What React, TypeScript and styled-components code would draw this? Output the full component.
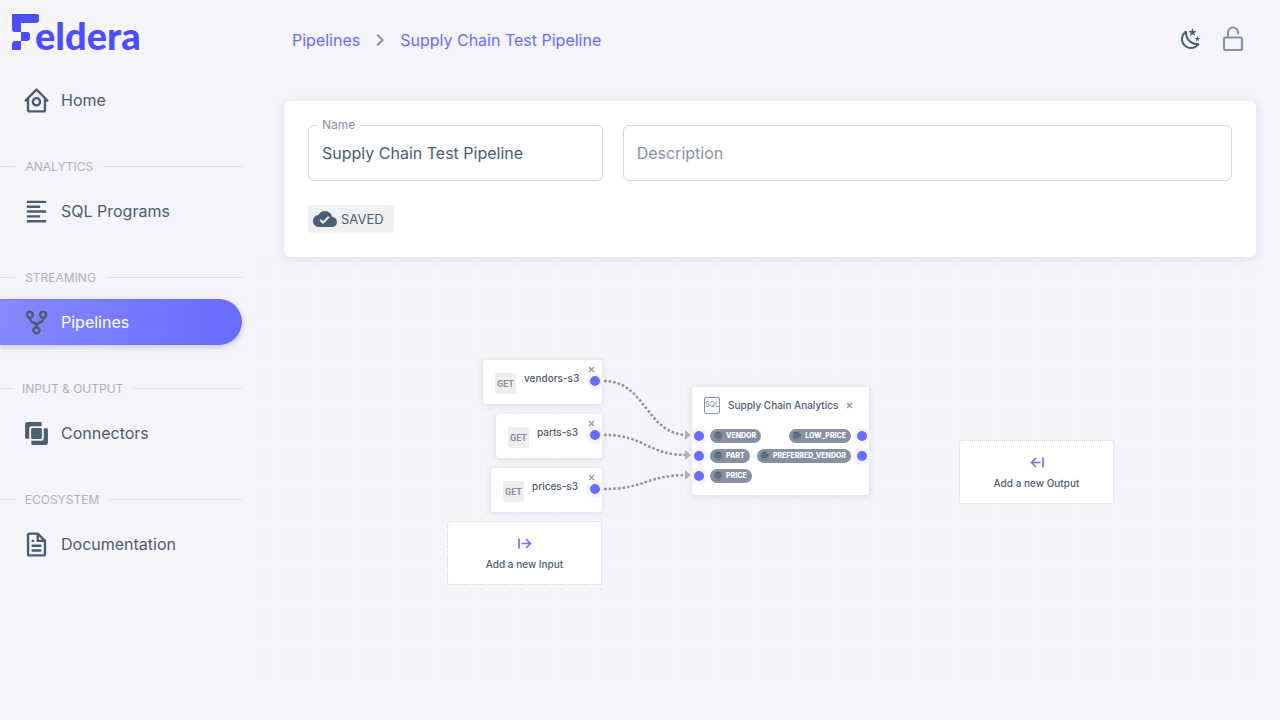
import React, { useState } from 'react'
import styled, { createGlobalStyle } from 'styled-components'
import { BiHomeCircle, BiAlignLeft, BiGitRepoForked, BiFile } from 'react-icons/bi'
import { MdCloudDone, MdChevronRight } from 'react-icons/md'

const color = {
  page: '#f4f4fa',
  text: '#4b5d70',
  muted: '#8592a3',
  faint: '#aab2bd',
  line: '#dfe0e6',
  primary: '#696cff',
  brand: '#4c4dff',
}

const GlobalStyle = createGlobalStyle`
  * { box-sizing: border-box; }
  body {
    margin: 0;
    background: ${color.page};
    color: ${color.text};
    font-family: 'Inter', 'Liberation Sans', sans-serif;
    font-size: 16px;
    line-height: 24px;
  }
  button, input { font: inherit; color: inherit; }
  button { border: 0; padding: 0; background: none; cursor: pointer; }
  a { color: inherit; text-decoration: none; }
`

const Layout = styled.div`
  display: flex;
  min-height: 100vh;
`

/* Sidebar */

const Sidebar = styled.nav`
  flex: 0 0 260px;
  padding-right: 18px;
`

const Brand = styled.a`
  display: flex;
  align-items: flex-start;
  height: 77px;
  padding: 14px 12px 0;
  color: ${color.brand};
`

const BrandText = styled.span`
  margin-left: -5px;
  font-family: 'Lato', sans-serif;
  font-size: 38px;
  font-weight: 900;
  line-height: 42px;
`

const NavItem = styled.a<{ $active?: boolean }>`
  display: flex;
  align-items: center;
  gap: 10px;
  height: 46px;
  padding-left: 22px;
  border-radius: 0 23px 23px 0;
  color: ${(p) => (p.$active ? '#ffffff' : color.text)};
  background: ${(p) => (p.$active ? 'linear-gradient(98deg, #8789ff, #696cff 94%)' : 'none')};
  box-shadow: ${(p) => (p.$active ? '0 2px 6px rgba(50, 71, 92, 0.25)' : 'none')};

  svg {
    width: 29px;
    height: 29px;
    color: ${color.text};
  }
`

const NavSection = styled.h2`
  display: flex;
  align-items: center;
  height: 21px;
  margin: 33px 0 11px;
  color: ${color.faint};
  font-size: 12px;
  font-weight: 400;
  white-space: nowrap;

  &::before,
  &::after {
    content: '';
    border-top: 1px solid ${color.line};
  }
  &::before { width: 10%; }
  &::after { width: 90%; }
`

const NavSectionText = styled.span`
  flex: none;
  padding: 0 10px;
`

/* Main column */

const Main = styled.main`
  display: flex;
  flex: 1;
  flex-direction: column;
  min-width: 0;
  padding-bottom: 36px;
`

const Header = styled.header`
  display: flex;
  align-items: center;
  justify-content: space-between;
  height: 77px;
  padding: 0 35px 0 32px;
`

const Crumbs = styled.nav`
  display: flex;
  align-items: center;
  gap: 8px;
  padding-top: 3px;
  color: ${color.primary};

  svg { color: ${color.muted}; }
`

const HeaderActions = styled.div`
  display: flex;
  align-items: center;
  gap: 18px;
`

const IconButton = styled.button<{ $muted?: boolean }>`
  display: flex;
  color: ${(p) => (p.$muted ? color.muted : color.text)};
`

const Card = styled.section`
  display: grid;
  gap: 24px;
  margin: 24px 24px 0;
  padding: 24px;
  border-radius: 6px;
  background: #ffffff;
  box-shadow: 0 2px 10px rgba(50, 71, 92, 0.12);
  z-index: 1;
`

const Fields = styled.div`
  display: grid;
  grid-template-columns: repeat(12, minmax(0, 1fr));
  column-gap: 20px;
`

const Field = styled.div<{ $span: number }>`
  position: relative;
  grid-column: span ${(p) => p.$span};
`

const FieldLabel = styled.label`
  position: absolute;
  top: -8px;
  left: 9px;
  padding: 0 5px;
  background: #ffffff;
  color: ${color.muted};
  font-size: 12px;
  line-height: 16px;
`

const TextInput = styled.input`
  width: 100%;
  height: 56px;
  padding: 0 13px;
  border: 1px solid #d2d5da;
  border-radius: 6px;
  background: none;
  outline: 0;

  &::placeholder { color: ${color.muted}; opacity: 1; }
`

const SavedButton = styled.button`
  display: flex;
  align-items: center;
  justify-self: start;
  gap: 4px;
  height: 28px;
  padding: 0 10px 0 5px;
  border-radius: 4px;
  background: #eef0f2;
  font-size: 13px;
`

/* Flow canvas */

const Canvas = styled.section`
  position: relative;
  flex: 1;
  min-height: 400px;
  margin-right: 24px;
  overflow: hidden;
`

const CanvasLayer = styled.svg`
  position: absolute;
  inset: 0;
  width: 100%;
  height: 100%;
`

const Node = styled.article<{ $x: number; $y: number; $w: number }>`
  position: absolute;
  left: ${(p) => p.$x}px;
  top: ${(p) => p.$y}px;
  width: ${(p) => p.$w}px;
  border-radius: 3px;
  background: #ffffff;
  box-shadow: 0 1px 6px rgba(50, 71, 92, 0.14);
  font-size: 10px;
  font-weight: 500;
  line-height: 12px;
`

const SourceBody = styled.div`
  display: flex;
  align-items: flex-start;
  gap: 8px;
  height: 44px;
  padding: 12px;
`

const MethodBadge = styled.span`
  display: grid;
  place-items: center;
  flex: none;
  width: 21px;
  height: 21px;
  margin-top: 1px;
  border-radius: 2px;
  background: #eeeeee;
  color: ${color.muted};
  font-family: 'Roboto', sans-serif;
  font-size: 9px;
  font-weight: 700;
`

const CloseButton = styled.button`
  display: flex;
  color: ${color.muted};
`

const CornerClose = styled(CloseButton)`
  position: absolute;
  top: 6px;
  right: 7px;
`

const Handle = styled.span<{ $side: 'left' | 'right'; $y: number }>`
  position: absolute;
  top: ${(p) => p.$y - 9}px;
  ${(p) => p.$side}: -2px;
  width: 18px;
  height: 18px;
  border: 4px solid ${color.page};
  border-radius: 50%;
  background: ${color.primary};
`

const ProgramHead = styled.header`
  display: flex;
  align-items: center;
  gap: 8px;
  height: 36px;
  padding-left: 12px;
`

const SqlBadge = styled.span`
  display: grid;
  place-items: center;
  width: 16px;
  height: 17px;
  border: 1px solid ${color.muted};
  border-radius: 2px;
  color: ${color.muted};
  font-size: 7px;
  line-height: 8px;
`

const ProgramTitle = styled.h3`
  flex: none;
  margin: 0;
  font-size: 10px;
  font-weight: 500;
  white-space: nowrap;
`

const Ports = styled.div`
  display: flex;
  flex-direction: column;
  gap: 6px;
  padding: 6px 18px 12px;
`

const PortRow = styled.div`
  display: flex;
  justify-content: space-between;
`

const Chip = styled.span`
  display: flex;
  align-items: center;
  gap: 3px;
  height: 14px;
  padding: 0 5px 0 3px;
  border-radius: 7px;
  background: ${color.muted};
  color: #ffffff;
  font-size: 7px;
  font-weight: 800;
  line-height: 14px;
  white-space: nowrap;
`

const AddButton = styled.button<{ $x: number; $y: number }>`
  position: absolute;
  left: ${(p) => p.$x}px;
  top: ${(p) => p.$y}px;
  display: flex;
  flex-direction: column;
  align-items: center;
  justify-content: center;
  gap: 8px;
  width: 155px;
  height: 64px;
  padding-top: 2px;
  border: 1px dotted #cfd2d8;
  border-radius: 3px;
  background: #ffffff;
  font-size: 10px;
  font-weight: 500;
  line-height: 14px;

  svg { color: ${color.primary}; }
`

/* Icons */

const BrandMark = () => (
  <svg width="28" height="36" viewBox="0 0 28 36" fill="currentColor" aria-hidden="true">
    <path d="M0 0H25.5a1.5 1.5 0 0 1 1.5 1.5V6a3 3 0 0 1-3 3H9v9H3a3 3 0 0 1-3-3z" />
    <path d="M9 18h6a3 3 0 0 1 3 3v3a3 3 0 0 1-3 3H9z" />
    <path d="M3 27h6v9H0v-6a3 3 0 0 1 3-3z" />
  </svg>
)

const ConnectorsIcon = () => (
  <svg viewBox="-2 -2 28 28" fill="currentColor" aria-hidden="true">
    <path d="M3 1h13a1 1 0 0 1 1 1v3H7a2 2 0 0 0-2 2v10H2a1 1 0 0 1-1-1V3a2 2 0 0 1 2-2z" />
    <rect x="6.800" y="6.800" width="10.400" height="10.400" rx="1" />
    <path d="M19 7h3a1 1 0 0 1 1 1v13a2 2 0 0 1-2 2H8a1 1 0 0 1-1-1v-3h10a2 2 0 0 0 2-2z" />
  </svg>
)

const NightIcon = () => (
  <svg width="24" height="24" viewBox="0 0 24 24" fill="currentColor" aria-hidden="true">
    <path d="M17.75,4.09L15.22,6.03L16.13,9.09L13.5,7.28L10.87,9.09L11.78,6.03L9.25,4.09L12.44,4L13.5,1L14.56,4L17.75,4.09M21.25,11L19.61,12.25L20.2,14.23L18.5,13.06L16.8,14.23L17.39,12.25L15.75,11L17.81,10.95L18.5,9L19.19,10.95L21.25,11M18.97,15.95C19.8,15.87 20.69,17.05 20.16,17.8C19.84,18.25 19.5,18.67 19.08,19.07C15.17,23 8.84,23 4.94,19.07C1.03,15.17 1.03,8.83 4.94,4.93C5.34,4.53 5.76,4.17 6.21,3.85C6.96,3.32 8.14,4.21 8.06,5.04C7.79,7.9 8.75,10.87 10.95,13.06C13.14,15.26 16.1,16.22 18.97,15.95M17.33,17.97C14.5,17.81 11.7,16.64 9.53,14.5C7.36,12.31 6.2,9.5 6.04,6.68C3.23,9.82 3.34,14.64 6.35,17.66C9.37,20.67 14.19,20.78 17.33,17.97Z" />
  </svg>
)

const UnlockIcon = () => (
  <svg width="24" height="26" viewBox="0 0 24 26" fill="none" stroke="currentColor" strokeWidth="2.200" strokeLinecap="round" aria-hidden="true">
    <rect x="3" y="11.500" width="18" height="12.500" rx="1.5" />
    <path d="M7 11V6.500a5 5 0 0 1 10 0v1" />
  </svg>
)

const CloseIcon = () => (
  <svg width="7" height="7" viewBox="0 0 7 7" fill="none" stroke="currentColor" strokeWidth="1.1" aria-hidden="true">
    <path d="M1 1l5 5M6 1l-5 5" />
  </svg>
)

const ArrowIcon = ({ left = false }: { left?: boolean }) => (
  <svg width="14" height="11" viewBox="0 0 14 11" fill="none" stroke="currentColor" strokeWidth="1.600" aria-hidden="true">
    <path d={left ? 'M13 .5v10M10.500 5.500H1.500M6 1L1.500 5.500 6 10' : 'M1 .5v10M3.500 5.500h9M8 1l4.500 4.500L8 10'} />
  </svg>
)

const TableIcon = () => (
  <svg width="10" height="10" viewBox="0 0 10 10" aria-hidden="true">
    <circle cx="5" cy="5.500" r="4.500" fill="#788698" />
    <path d="M1.500 2L5 .5 8.500 2 5 3.500z" fill={color.text} />
    <path d="M1.500 3.500L5 5l3.500-1.500M1.500 5.300L5 6.800l3.500-1.500" stroke={color.text} fill="none" />
  </svg>
)

const ViewIcon = () => (
  <svg width="10" height="10" viewBox="0 0 10 10" aria-hidden="true">
    <circle cx="5" cy="5.500" r="4.500" fill="#788698" />
    <path d="M1 2L4 .5 7 2 4 3.500zM6.500 2.500L9.500 4l-3 1.500z" fill={color.text} />
    <path d="M1 3.500L4 5l3-1.500M1 5.300l3 1.500 3-1.500" stroke={color.text} fill="none" />
  </svg>
)

/* Data */

const sections = [
  { title: 'ANALYTICS', label: 'SQL Programs', icon: <BiAlignLeft /> },
  { title: 'STREAMING', label: 'Pipelines', icon: <BiGitRepoForked />, active: true },
  { title: 'INPUT & OUTPUT', label: 'Connectors', icon: <ConnectorsIcon /> },
  { title: 'ECOSYSTEM', label: 'Documentation', icon: <BiFile /> },
]

const sources = [
  { name: 'vendors-s3', x: 223, y: 103, w: 119 },
  { name: 'parts-s3', x: 236, y: 157, w: 106 },
  { name: 'prices-s3', x: 231, y: 211, w: 111 },
]

const ports = [
  { table: 'VENDOR', view: 'LOW_PRICE' },
  { table: 'PART', view: 'PREFERRED_VENDOR' },
  { table: 'PRICE' },
]

const edges = [
  { from: 124, to: 178 },
  { from: 178, to: 198 },
  { from: 232, to: 218 },
]

export default function App() {
  const [name, setName] = useState('Supply Chain Test Pipeline')
  const [description, setDescription] = useState('')

  return (
    <Layout>
      <GlobalStyle />
      <Sidebar aria-label="Main">
        <Brand href="#" aria-label="Feldera">
          <BrandMark />
          <BrandText>eldera</BrandText>
        </Brand>
        <NavItem href="#home">
          <BiHomeCircle />
          Home
        </NavItem>
        {sections.map((s) => (
          <React.Fragment key={s.title}>
            <NavSection>
              <NavSectionText>{s.title}</NavSectionText>
            </NavSection>
            <NavItem href={`#${s.label}`} $active={s.active}>
              {s.icon}
              {s.label}
            </NavItem>
          </React.Fragment>
        ))}
      </Sidebar>

      <Main>
        <Header>
          <Crumbs aria-label="Breadcrumb">
            <a href="#pipelines">Pipelines</a>
            <MdChevronRight size={24} />
            <a href="#pipeline">Supply Chain Test Pipeline</a>
          </Crumbs>
          <HeaderActions>
            <IconButton type="button" aria-label="Dark mode">
              <NightIcon />
            </IconButton>
            <IconButton type="button" aria-label="Unlock" $muted>
              <UnlockIcon />
            </IconButton>
          </HeaderActions>
        </Header>

        <Card>
          <Fields>
            <Field $span={4}>
              <TextInput id="name" value={name} onChange={(e) => setName(e.target.value)} />
              <FieldLabel htmlFor="name">Name</FieldLabel>
            </Field>
            <Field $span={8}>
              <TextInput
                aria-label="Description"
                placeholder="Description"
                value={description}
                onChange={(e) => setDescription(e.target.value)}
              />
            </Field>
          </Fields>
          <SavedButton type="button">
            <MdCloudDone size={24} />
            SAVED
          </SavedButton>
        </Card>

        <Canvas aria-label="Pipeline graph">
          <CanvasLayer aria-hidden="true">
            <defs>
              <pattern id="dots" width="10" height="10" patternUnits="userSpaceOnUse">
                <rect x="0" y="2" width="1" height="1" fill="#dcdce2" />
              </pattern>
            </defs>
            <rect width="100%" height="100%" fill="url(#dots)" />
          </CanvasLayer>

          {sources.map((s) => (
            <Node key={s.name} $x={s.x} $y={s.y} $w={s.w}>
              <SourceBody>
                <MethodBadge>GET</MethodBadge>
                {s.name}
              </SourceBody>
              <CornerClose type="button" aria-label={`Remove ${s.name}`}>
                <CloseIcon />
              </CornerClose>
              <Handle $side="right" $y={21} />
            </Node>
          ))}

          <Node $x={432} $y={130} $w={177}>
            <ProgramHead>
              <SqlBadge>SQL</SqlBadge>
              <ProgramTitle>Supply Chain Analytics</ProgramTitle>
              <CloseButton type="button" aria-label="Remove program">
                <CloseIcon />
              </CloseButton>
            </ProgramHead>
            <Ports>
              {ports.map((p) => (
                <PortRow key={p.table}>
                  <Chip>
                    <TableIcon />
                    {p.table}
                  </Chip>
                  {p.view && (
                    <Chip>
                      <ViewIcon />
                      {p.view}
                    </Chip>
                  )}
                </PortRow>
              ))}
            </Ports>
            {ports.map((p, i) => (
              <React.Fragment key={p.table}>
                <Handle $side="left" $y={49 + i * 20} />
                {p.view && <Handle $side="right" $y={49 + i * 20} />}
              </React.Fragment>
            ))}
          </Node>

          <AddButton type="button" $x={187} $y={264}>
            <ArrowIcon />
            Add a new Input
          </AddButton>
          <AddButton type="button" $x={699} $y={183}>
            <ArrowIcon left />
            Add a new Output
          </AddButton>

          <CanvasLayer aria-hidden="true" pointerEvents="none">
            {edges.map((e) => (
              <g key={e.to}>
                <path
                  d={`M344 ${e.from}C386 ${e.from} 386 ${e.to} 428 ${e.to}`}
                  fill="none"
                  stroke={color.muted}
                  strokeWidth="2.500"
                  strokeDasharray="2.500 2.100"
                />
                <path d={`M425 ${e.to - 5}l6 5-6 5z`} fill="#b1b1b7" />
              </g>
            ))}
          </CanvasLayer>
        </Canvas>
      </Main>
    </Layout>
  )
}
